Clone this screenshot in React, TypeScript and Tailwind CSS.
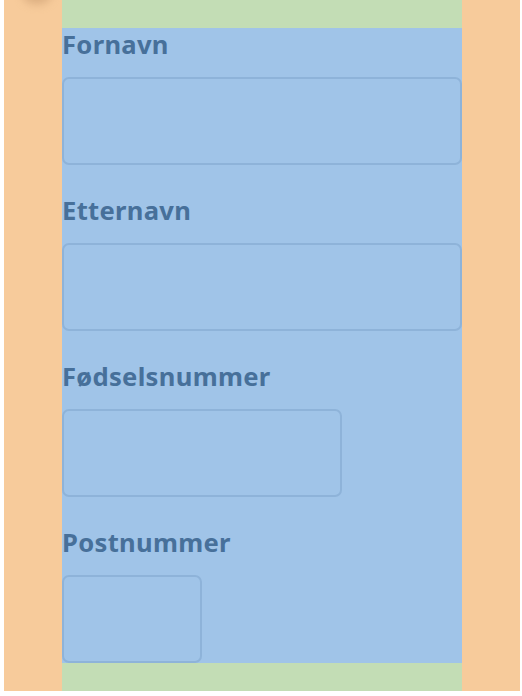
const fields = [
  { label: "Fornavn", width: "w-full" },
  { label: "Etternavn", width: "w-full" },
  { label: "Fødselsnummer", width: "w-[280px]" },
  { label: "Postnummer", width: "w-[140px]" },
];

export default function App() {
  return (
    <div className="relative w-[522px] h-[696px] bg-white overflow-hidden">
      {/* soft shadow peeking in at the top */}
      <div className="absolute left-[22px] -top-[22px] w-[30px] h-[26px] rounded-full bg-[#c89a6e] opacity-60 blur-[5px]" />

      <div className="ml-1 w-[516px] bg-[#f7cb9b] px-[58px]">
        <div className="bg-[#c3ddb5] py-[28px]">
          <form className="bg-[#a0c4e8] flex flex-col">
            {fields.map((f, i) => (
              <div key={f.label} className={i < fields.length - 1 ? "mb-[29px]" : ""}>
                <label className="block font-['Noto_Sans',sans-serif] font-bold text-[25.6px] tracking-[0.3px] leading-[33px] mb-[16px] text-[#47709a]">
                  {f.label}
                </label>
                <div
                  className={`${f.width} h-[88px] rounded-[7px] border-2 border-[#8eb3d9]`}
                />
              </div>
            ))}
          </form>
        </div>
      </div>
    </div>
  );
}
